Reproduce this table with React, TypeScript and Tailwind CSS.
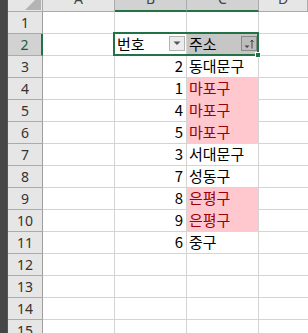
const rows: { no?: number; addr?: string; hit?: boolean }[] = [
  {},
  {},
  { no: 2, addr: "동대문구" },
  { no: 1, addr: "마포구", hit: true },
  { no: 4, addr: "마포구", hit: true },
  { no: 5, addr: "마포구", hit: true },
  { no: 3, addr: "서대문구" },
  { no: 7, addr: "성동구" },
  { no: 8, addr: "은평구", hit: true },
  { no: 9, addr: "은평구", hit: true },
  { no: 6, addr: "중구" },
  {},
  {},
  {},
  {},
]

const cellFont = "font-['Noto_Sans_CJK_KR','Noto_Sans',sans-serif] text-[15px]"
const headFont = "font-['Noto_Sans',sans-serif] text-[14px]"

function ColHead({ label, active }: { label: string; active?: boolean }) {
  return (
    <div
      className={
        "h-[12px] overflow-hidden border-r border-[#ababab] text-center text-[#444] " +
        headFont +
        (active ? " bg-[#d2d2d2] border-b-2 border-b-[#217346]" : " bg-[#e6e6e6] border-b border-b-[#ababab]")
      }
    >
      <div className="-mt-[8px] leading-[14px]">{label}</div>
    </div>
  )
}

function FilterButton({ sorted }: { sorted?: boolean }) {
  return (
    <div
      className={
        "absolute top-[2px] right-[1px] flex h-[15px] w-[16px] items-center justify-center border " +
        (sorted ? "border-[#8a8a8a] bg-[#bdbdbd]" : "border-[#b3b3b3] bg-[#ececec]")
      }
    >
      {sorted ? (
        <svg width="12" height="12" viewBox="0 0 12 12">
          <path d="M1.5 7.5h5l-2.5 2.5z" fill="#444" />
          <path d="M9 10.5V2.5M7.5 4l1.5-2 1.5 2" stroke="#444" strokeWidth="1" fill="none" />
        </svg>
      ) : (
        <svg width="8" height="5" viewBox="0 0 8 5">
          <path d="M0.5 0.5h7l-3.5 3.5z" fill="#555" />
        </svg>
      )}
    </div>
  )
}

export default function App() {
  return (
    <div className="flex h-[333px] w-[308px] overflow-hidden bg-white">
      <div className="w-[7px] shrink-0 bg-[#464646]" />
      <div className="w-px shrink-0 bg-[#217346]" />
      <div className="relative grid flex-1 grid-cols-[35px_72px_72px_72px_1fr] content-start">
        {/* select-all corner */}
        <div className="flex h-[12px] items-end justify-end overflow-hidden border-r border-b border-[#ababab] bg-[#e6e6e6] pr-[1px] pb-[1px]">
          <svg width="16" height="16" viewBox="0 0 16 16" className="shrink-0">
            <path d="M16 0V16H0z" fill="#b4b4b4" />
          </svg>
        </div>
        <ColHead label="A" />
        <ColHead label="B" active />
        <ColHead label="C" active />
        <ColHead label="D" />

        {rows.map((r, i) => {
          const n = i + 1
          const sel = n === 2
          return (
            <div key={n} className="contents">
              <div
                className={
                  "flex h-[22px] items-center justify-center border-b border-[#ababab] " +
                  headFont +
                  (sel
                    ? " bg-[#d2d2d2] text-[#1d5c38] border-r-2 border-r-[#217346]"
                    : " bg-[#e6e6e6] text-[#333] border-r border-r-[#9f9f9f]")
                }
              >
                {n}
              </div>
              <div className="h-[22px] border-r border-b border-[#d4d4d4]" />
              <div
                className={
                  "relative flex h-[22px] items-end justify-end border-r border-b border-[#d4d4d4] pr-[3px] pb-[1px] leading-[20px] text-black " +
                  cellFont
                }
              >
                {sel ? (
                  <>
                    <span className="mr-auto pl-[2px]">번호</span>
                    <FilterButton />
                  </>
                ) : (
                  r.no
                )}
              </div>
              <div
                className={
                  "relative flex h-[22px] items-end border-r border-b border-r-[#d4d4d4] pl-[2px] pb-[1px] leading-[20px] " +
                  cellFont +
                  (sel
                    ? " bg-[#c6c6c6] text-black border-b-[#d4d4d4]"
                    : r.hit
                      ? " bg-[#ffc7ce] text-[#9c0006] border-b-[#ffc7ce]"
                      : " text-black border-b-[#d4d4d4]")
                }
              >
                {sel ? (
                  <>
                    <span>주소</span>
                    <FilterButton sorted />
                  </>
                ) : (
                  r.addr
                )}
              </div>
              <div className="h-[22px] border-b border-[#d4d4d4]" />
            </div>
          )
        })}

        {/* selection outline over B2:C2 with fill handle */}
        <div className="pointer-events-none absolute top-[32px] left-[105px] h-[24px] w-[146px] border-2 border-[#217346]" />
        <div className="pointer-events-none absolute top-[52px] left-[247px] h-[6px] w-[6px] border border-white bg-[#217346]" />
      </div>
    </div>
  )
}
